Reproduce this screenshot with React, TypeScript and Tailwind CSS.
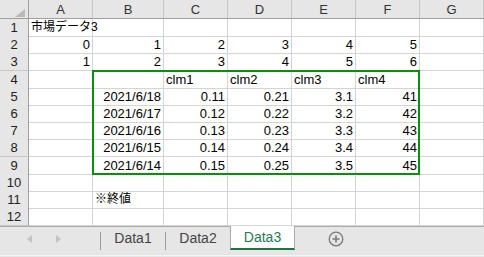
import React from 'react';

type Cell = { v?: string; left?: boolean; jp?: boolean };

const COLS = ['A', 'B', 'C', 'D', 'E', 'F', 'G'];
const ROW_H = ['h-[17px]', 'h-[17px]', 'h-[18px]', 'h-[17px]', 'h-[17px]', 'h-[17px]', 'h-[17px]', 'h-[18px]', 'h-[17px]', 'h-[17px]', 'h-[17px]', 'h-[18px]'];

const num = (v: string): Cell => ({ v });
const txt = (v: string): Cell => ({ v, left: true });
const jp = (v: string): Cell => ({ v, left: true, jp: true });
const E: Cell = {};

const rows: Cell[][] = [
  [jp('市場データ3'), E, E, E, E, E, E],
  [num('0'), num('1'), num('2'), num('3'), num('4'), num('5'), E],
  [num('1'), num('2'), num('3'), num('4'), num('5'), num('6'), E],
  [E, E, txt('clm1'), txt('clm2'), txt('clm3'), txt('clm4'), E],
  [E, num('2021/6/18'), num('0.11'), num('0.21'), num('3.1'), num('41'), E],
  [E, num('2021/6/17'), num('0.12'), num('0.22'), num('3.2'), num('42'), E],
  [E, num('2021/6/16'), num('0.13'), num('0.23'), num('3.3'), num('43'), E],
  [E, num('2021/6/15'), num('0.14'), num('0.24'), num('3.4'), num('44'), E],
  [E, num('2021/6/14'), num('0.15'), num('0.25'), num('3.5'), num('45'), E],
  [E, E, E, E, E, E, E],
  [E, jp('※終値'), E, E, E, E, E],
  [E, E, E, E, E, E, E],
];

const grid = 'grid grid-cols-[29px_64px_71px_64px_64px_64px_64px_1fr]';

function SheetTab({ name, active }: { name: string; active?: boolean }) {
  if (active) {
    return (
      <div className="relative -mt-px flex h-[24px] w-[65px] items-center justify-center border-x border-[#ababab] border-b-2 border-b-[#217346] bg-white text-[#1f7a5a]">
        {name}
      </div>
    );
  }
  return <div className="flex h-[23px] w-[64px] items-center justify-center text-[#444]">{name}</div>;
}

export default function App() {
  return (
    <div className="relative h-[257px] w-[484px] overflow-hidden bg-white font-['Liberation_Sans','Noto_Sans_CJK_JP',sans-serif] text-[13px] leading-[17px] text-black">
      {/* column headers */}
      <div className={`${grid} h-[19px] border-b border-[#9f9f9f] bg-[#e6e6e6]`}>
        <div className="relative border-r border-[#9f9f9f]">
          <svg className="absolute left-[15px] top-[9px]" width="10" height="8" viewBox="0 0 10 8">
            <polygon points="10,0 10,8 0,8" fill="#b9b9b9" />
          </svg>
        </div>
        {COLS.map((c) => (
          <div key={c} className="flex items-center justify-center border-r border-[#c8c8c8] text-[#333]">
            {c}
          </div>
        ))}
      </div>

      {/* rows */}
      {rows.map((cells, i) => (
        <div key={i} className={`${grid} ${ROW_H[i]}`}>
          <div className="flex items-center justify-center border-r border-b border-r-[#9f9f9f] border-b-[#c8c8c8] bg-[#e6e6e6] text-[#222]">
            {i + 1}
          </div>
          {cells.map((c, j) => (
            <div
              key={j}
              className={`flex items-center border-r border-b border-[#d4d4d4] px-[2px] ${c.left ? 'justify-start' : 'justify-end'} ${c.jp ? 'overflow-visible whitespace-nowrap text-[12px] z-10' : ''}`}
            >
              {c.v}
            </div>
          ))}
        </div>
      ))}

      {/* selection range border */}
      <div className="pointer-events-none absolute left-[92px] top-[70px] h-[105px] w-[328px] border-2 border-[#0a8f0a]" />

      {/* sheet tabs */}
      <div className="absolute bottom-0 left-0 right-0 top-[226px] border-t border-[#ababab] bg-[#e6e6e6] text-[14px]">
        <div className="flex h-[25px] items-start">
          <div className="flex h-[24px] w-[100px] items-center gap-[24px] pl-[27px]">
            <svg width="5" height="8" viewBox="0 0 5 8"><polygon points="5,0 5,8 0,4" fill="#c4c4c4" /></svg>
            <svg width="5" height="8" viewBox="0 0 5 8"><polygon points="0,0 0,8 5,4" fill="#c4c4c4" /></svg>
          </div>
          <div className="mt-[5px] h-[18px] w-px bg-[#9a9a9a]" />
          <SheetTab name="Data1" />
          <div className="mt-[5px] h-[18px] w-px bg-[#9a9a9a]" />
          <SheetTab name="Data2" />
          <SheetTab name="Data3" active />
          <div className="ml-[33px] flex h-[24px] items-center">
            <svg width="16" height="16" viewBox="0 0 16 16">
              <circle cx="8" cy="8" r="6.8" fill="none" stroke="#7a7a7a" strokeWidth="1.3" />
              <path d="M8 4.5v7M4.5 8h7" stroke="#7a7a7a" strokeWidth="1.6" />
            </svg>
          </div>
        </div>
        <div className="mt-[3px] h-px bg-[#f4f4f4]" />
      </div>
    </div>
  );
}
